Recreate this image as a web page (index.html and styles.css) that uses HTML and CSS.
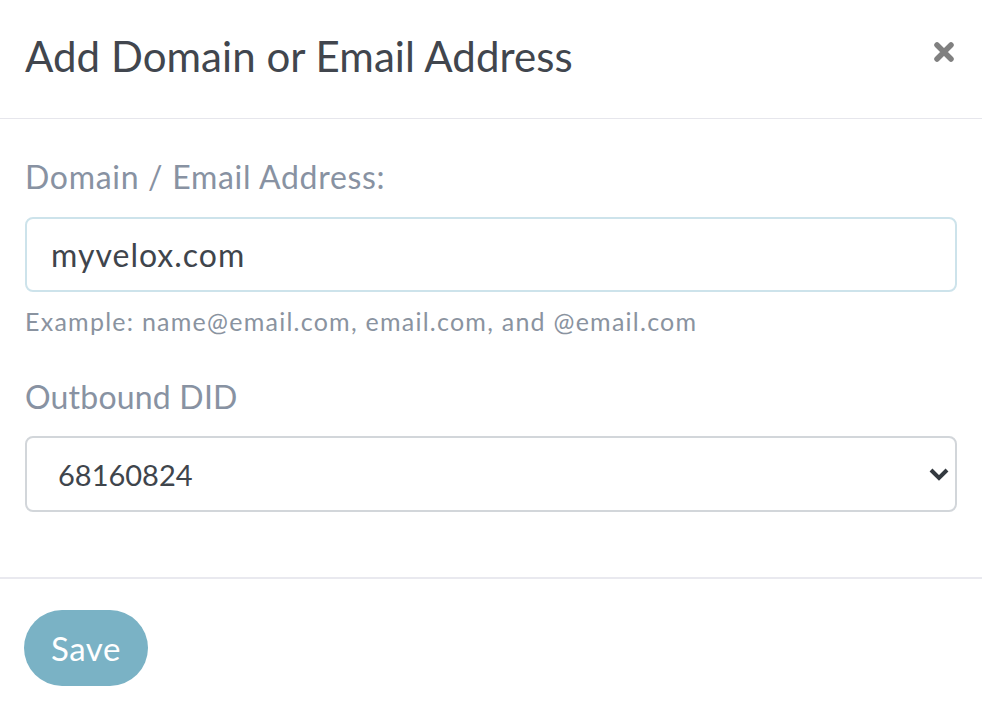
FILE: index.html
```html
<!DOCTYPE html>
<html lang="en">
<head>
<meta charset="utf-8">
<title>Add Domain or Email Address</title>
<link rel="stylesheet" href="styles.css">
</head>
<body>
<div class="modal">
  <div class="modal-header">
    <h1 class="modal-title">Add Domain or Email Address</h1>
    <button class="close" type="button" aria-label="Close">
      <svg width="22" height="22" viewBox="0 0 22 22"><path d="M4 4L18 18M18 4L4 18" stroke="#808080" stroke-width="5.5" stroke-linecap="round" fill="none"/></svg>
    </button>
  </div>
  <div class="modal-body">
    <label class="label">Domain / Email Address:</label>
    <div class="input">myvelox.com</div>
    <div class="help">Example: name@email.com, email.com, and @email.com</div>
    <label class="label label-2">Outbound DID</label>
    <div class="select">
      <span>68160824</span>
      <svg width="22" height="16" viewBox="0 0 22 16"><path d="M3 4L11 12L19 4" stroke="#343a40" stroke-width="4" fill="none"/></svg>
    </div>
  </div>
  <div class="modal-footer">
    <button class="btn" type="button">Save</button>
  </div>
</div>
</body>
</html>
```
FILE: styles.css
```css
* { box-sizing: border-box; }
html, body { margin: 0; padding: 0; background: #fff; }
body { font-family: Lato, "Open Sans", sans-serif; width: 982px; height: 714px; overflow: hidden; }
.modal { display: flex; flex-direction: column; }
.modal-header {
  height: 119px;
  border-bottom: 1px solid #e6e6ec;
  display: flex;
  align-items: center;
  justify-content: space-between;
  padding: 0 25px 6px 25px;
}
.modal-title {
  margin: 0;
  font-weight: 400;
  font-size: 42px;
  color: #41464e;
  line-height: 1;
  letter-spacing: 0.05px;
}
.close {
  border: 0;
  background: none;
  padding: 0;
  margin: 0 2px 8px 0;
  display: flex;
}
.modal-body { padding: 38px 25px 65px 25px; display: flex; flex-direction: column; }
.label {
  display: block;
  font-size: 32px;
  line-height: 40px;
  color: #8892a2;
}
.label-1 { letter-spacing: 0.8px; }
.label { letter-spacing: 0.7px; }
.label-2 { margin-top: 38px; letter-spacing: 0.2px; }
.input {
  margin-top: 20px;
  height: 75px;
  border: 2px solid #cde3eb;
  border-radius: 8px;
  padding: 0 24px;
  display: flex;
  align-items: center;
  font-size: 32px;
  letter-spacing: 1px;
  color: #3f454c;
}
.help {
  margin-top: 11px;
  font-size: 25px;
  line-height: 36px;
  letter-spacing: 1.25px;
  color: #8a93a0;
}
.select {
  margin-top: 19px;
  height: 76px;
  border: 2px solid #d2d6da;
  border-radius: 8px;
  padding: 0 5px 0 31px;
  display: flex;
  align-items: center;
  justify-content: space-between;
  font-size: 29px;
  color: #3f454c;
}
.modal-footer {
  border-top: 2px solid #e9e9ef;
  padding: 31px 25px 0 24px;
}
.btn {
  width: 124px;
  height: 76px;
  border: 0;
  border-radius: 38px;
  background: #7ab2c5;
  color: #fff;
  font-family: Lato, "Open Sans", sans-serif;
  font-size: 33px;
  letter-spacing: 0.6px;
  padding: 0;
}
```
